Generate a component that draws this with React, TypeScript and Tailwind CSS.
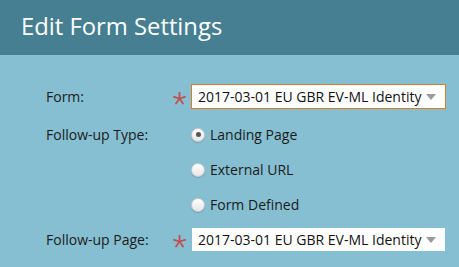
import React from "react";

const Asterisk = () => (
  <svg width="13" height="13" viewBox="0 0 13 13" className="mt-[3px]">
    <g stroke="#c0504f" strokeWidth="1.8" strokeLinecap="round">
      <line x1="6.5" y1="6.5" x2="6.5" y2="0.8" />
      <line x1="6.5" y1="6.5" x2="12" y2="4.8" />
      <line x1="6.5" y1="6.5" x2="1" y2="4.8" />
      <line x1="6.5" y1="6.5" x2="10" y2="11.5" />
      <line x1="6.5" y1="6.5" x2="3" y2="11.5" />
    </g>
  </svg>
);

const Select = ({ focused }: { focused?: boolean }) => (
  <div
    className={`flex h-[25px] w-[255px] shrink-0 items-center justify-between border bg-white bg-clip-padding pl-[6px] pr-[9px] ${
      focused ? "border-[#e07b1e]" : "border-transparent"
    }`}
  >
    <span className="text-[14px] leading-none text-[#111]">2017-03-01 EU GBR EV-ML Identity</span>
    <svg width="10" height="6" viewBox="0 0 10 6">
      <path d="M0 0h10L5 6z" fill="#9a9a9a" />
    </svg>
  </div>
);

const Radio = ({ label, checked }: { label: string; checked?: boolean }) => (
  <div className="flex h-[35px] items-center">
    <div className="flex h-[14px] w-[14px] items-center justify-center rounded-full border border-[#c9c9c9] bg-gradient-to-b from-white to-[#e6e6e6] shadow-[0_1px_1px_rgba(0,0,0,0.15)]">
      {checked && <div className="h-[5px] w-[5px] rounded-full bg-[#555]" />}
    </div>
    <span className="ml-[5px] text-[14px] text-[#1b1b1b]">{label}</span>
  </div>
);

export default function App() {
  return (
    <div className="h-[267px] w-[459px] overflow-hidden bg-[#86bfd1] font-['Open_Sans',sans-serif]">
      <div className="flex h-[55px] items-center bg-[#467f91] pl-[21px]">
        <h1 className="mb-[1px] text-[23.8px] text-white">Edit Form Settings</h1>
      </div>
      <div className="pl-[46px] pt-[29px]">
        <div className="flex h-[25px] items-center">
          <div className="w-[127px] shrink-0 text-[14px] text-[#1b1b1b]">Form:</div>
          <div className="w-[18px] shrink-0">
            <Asterisk />
          </div>
          <Select focused />
        </div>
        <div className="mt-[8px] flex">
          <div className="flex h-[35px] w-[145px] shrink-0 items-center text-[14px] text-[#1b1b1b]">
            Follow-up Type:
          </div>
          <div className="flex flex-col">
            <Radio label="Landing Page" checked />
            <Radio label="External URL" />
            <Radio label="Form Defined" />
          </div>
        </div>
        <div className="mt-[5px] flex h-[25px] items-center">
          <div className="w-[127px] shrink-0 text-[14px] text-[#1b1b1b]">Follow-up Page:</div>
          <div className="w-[18px] shrink-0">
            <Asterisk />
          </div>
          <Select />
        </div>
      </div>
    </div>
  );
}
